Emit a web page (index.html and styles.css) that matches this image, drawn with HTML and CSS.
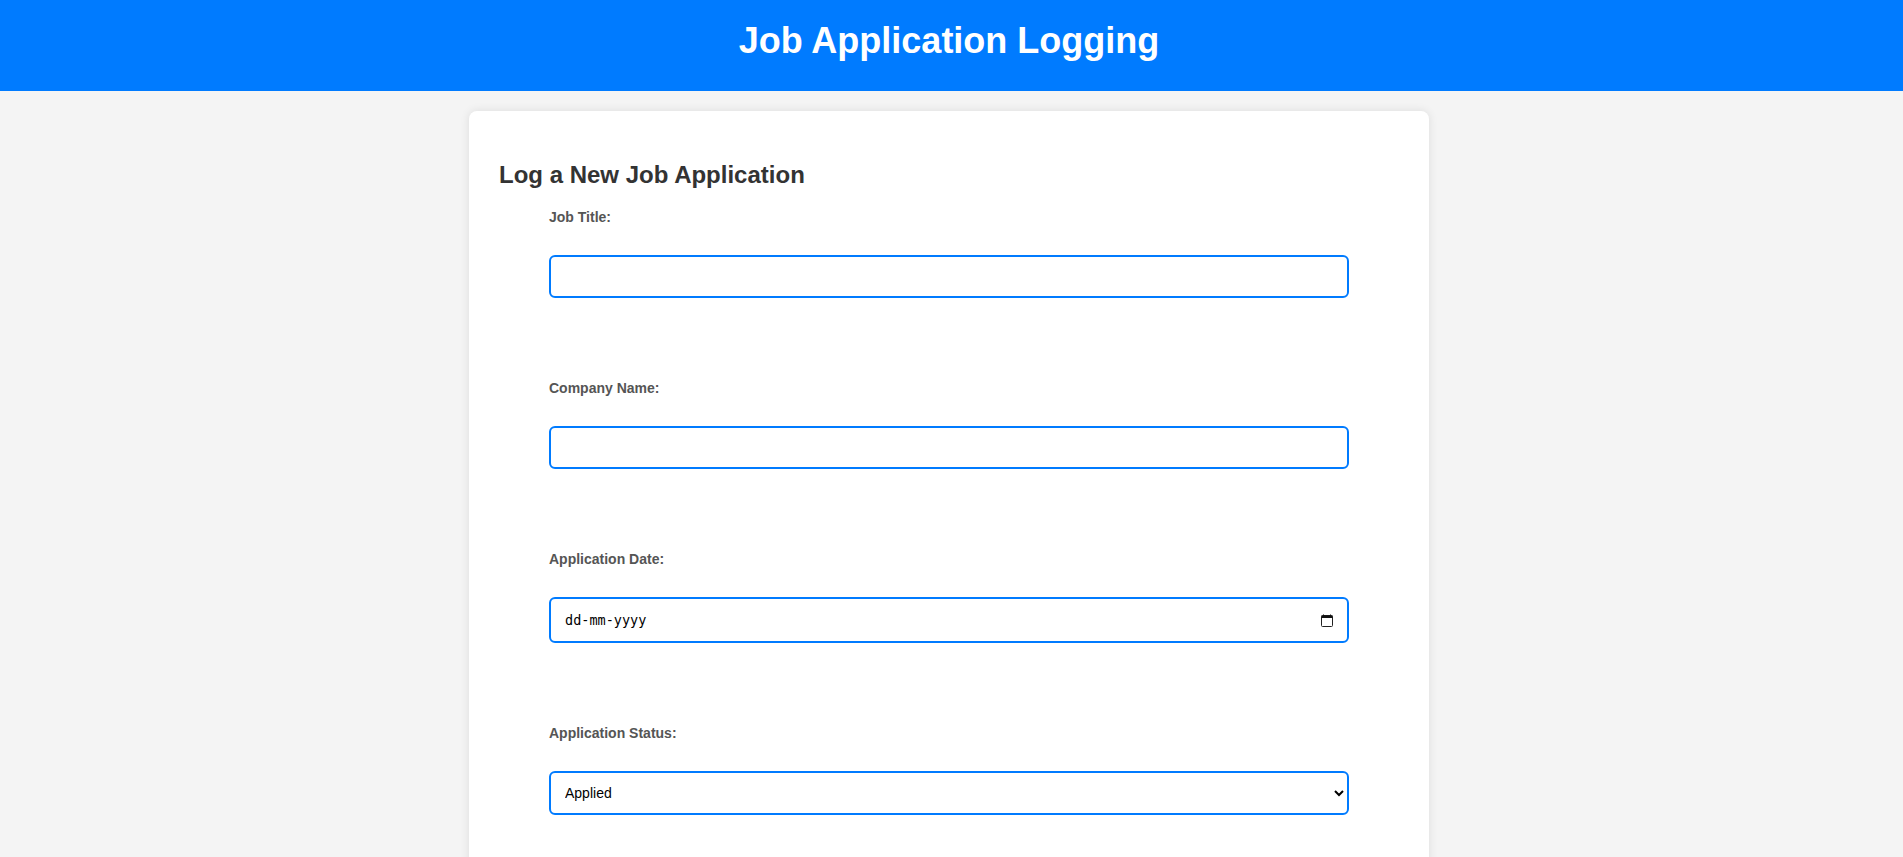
FILE: index.html
```html
<!DOCTYPE html>
<html lang="en">
<head>
<meta charset="utf-8">
<title>Job Application Logging</title>
<link rel="stylesheet" href="styles.css">
</head>
<body>
<header class="site-header">
  <h1 class="site-title">Job Application Logging</h1>
</header>
<main class="main">
  <section class="card">
    <h2 class="card-title">Log a New Job Application</h2>
    <form class="job-form">
      <div class="form-group">
        <label class="form-label" for="jobTitle">Job Title:</label>
        <input class="form-input" type="text" id="jobTitle">
      </div>
      <div class="form-group">
        <label class="form-label" for="company">Company Name:</label>
        <input class="form-input" type="text" id="company">
      </div>
      <div class="form-group">
        <label class="form-label" for="appDate">Application Date:</label>
        <div class="date-field">
          <input class="date-text" type="text" id="appDate" placeholder="dd-mm-yyyy">
          <svg class="cal-icon" width="12" height="13" viewBox="0 0 12 13" aria-hidden="true">
            <rect x="0.5" y="1.5" width="11" height="11" rx="1" fill="none" stroke="#222" stroke-width="1"/>
            <rect x="0.5" y="1.5" width="11" height="2.5" fill="#111"/>
            <path d="M2.5 0.5v1.5M9.5 0.5v1.5" stroke="#111" stroke-width="1"/>
          </svg>
        </div>
      </div>
      <div class="form-group">
        <label class="form-label" for="status">Application Status:</label>
        <select class="form-select" id="status">
          <option>Applied</option>
          <option>Interviewing</option>
          <option>Offer</option>
          <option>Rejected</option>
        </select>
      </div>
    </form>
  </section>
</main>
</body>
</html>
```

FILE: styles.css
```css
* {
  box-sizing: border-box;
}

html, body {
  margin: 0;
  padding: 0;
}

body {
  background: #f4f4f4;
  font-family: "Liberation Sans", Arial, sans-serif;
  color: #333;
}

.site-header {
  background: #007bff;
  color: #fff;
  padding: 20px 5px 30px 0;
  text-align: center;
}

.site-title {
  margin: 0;
  font-size: 36px;
  line-height: 41px;
  font-weight: bold;
}

.main {
  padding: 20px 5px 0 0;
}

.card {
  width: 960px;
  margin: 0 auto;
  background: #fff;
  border-radius: 8px;
  box-shadow: 0 0 10px rgba(0, 0, 0, 0.1);
  padding: 30px 30px 20px;
}

.card-title {
  margin: 20px 0;
  font-size: 24px;
  font-weight: bold;
  color: #333;
}

.job-form {
  max-width: 800px;
  margin: 0 auto;
}

.form-group {
  display: flex;
  flex-direction: column;
  margin-bottom: 82px;
}

.form-label {
  display: block;
  font-size: 14px;
  line-height: 16px;
  font-weight: bold;
  color: #555;
  margin-bottom: 30px;
}

.form-input {
  width: 100%;
  height: 43px;
  border: 2px solid #007bff;
  border-radius: 6px;
  padding: 0 12px;
  font-family: "Liberation Sans", Arial, sans-serif;
  font-size: 14px;
  background: #fff;
  outline: none;
}

.date-field {
  display: flex;
  align-items: center;
  width: 100%;
  height: 46px;
  border: 2px solid #007bff;
  border-radius: 6px;
  padding: 0 14px 0 12px;
  background: #fff;
}

.date-text {
  flex: 1;
  border: none;
  outline: none;
  padding: 0 0 0 2px;
  font-family: "DejaVu Sans Mono", "Liberation Mono", monospace;
  font-size: 13.5px;
  color: #000;
  background: transparent;
}

.date-text::placeholder {
  color: #000;
  opacity: 1;
}

.cal-icon {
  flex: none;
  display: block;
}

.form-select {
  width: 100%;
  height: 44px;
  border: 2px solid #007bff;
  border-radius: 6px;
  padding: 0 8px 0 10px;
  font-family: "Liberation Sans", Arial, sans-serif;
  font-size: 14px;
  color: #000;
  background: #fff;
  outline: none;
}
```
